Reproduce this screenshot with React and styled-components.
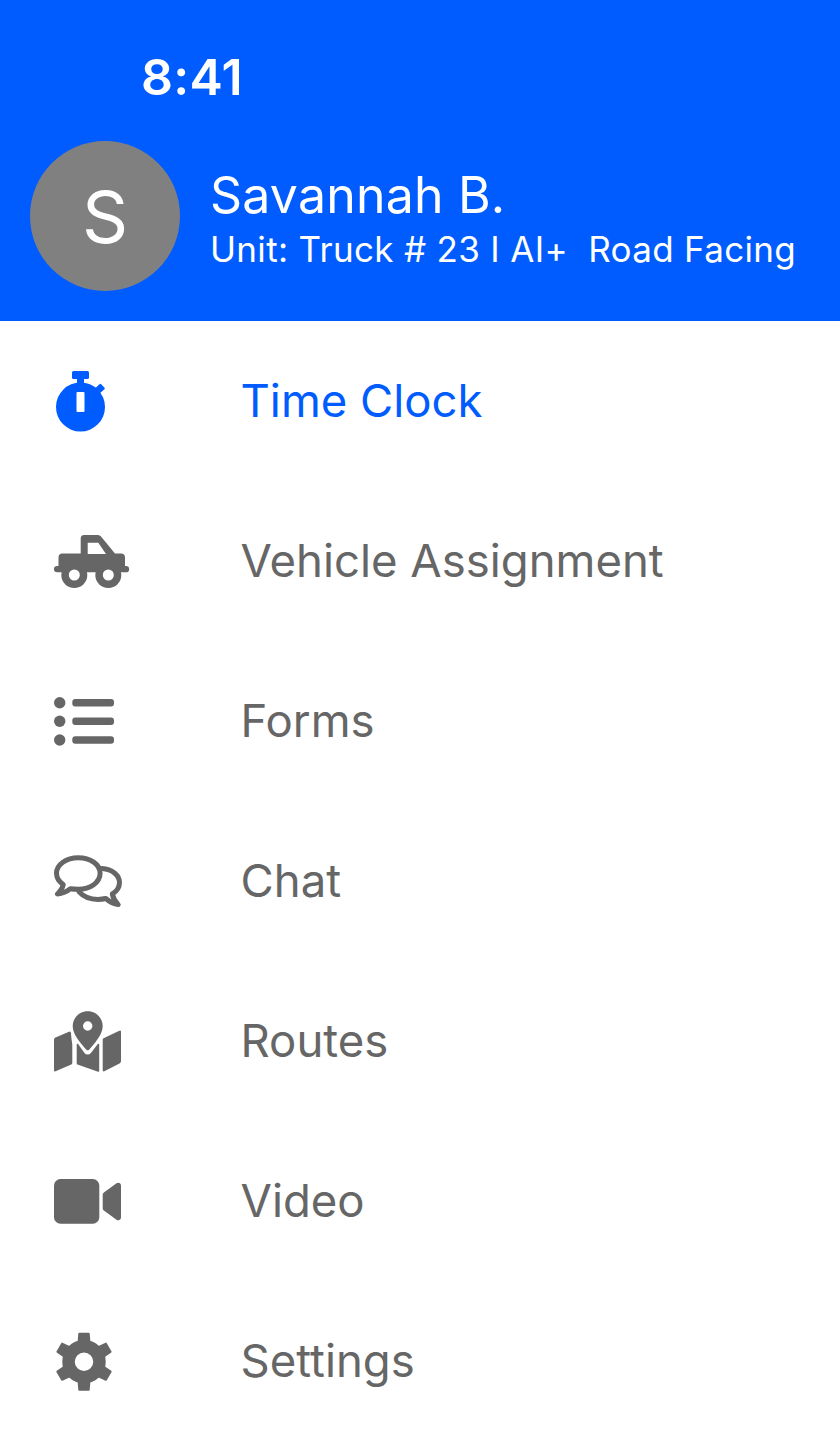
import React from "react";
import styled, { createGlobalStyle } from "styled-components";

const GlobalStyle = createGlobalStyle`
  html, body {
    margin: 0;
    padding: 0;
    background: #fff;
    font-family: Inter, "Liberation Sans", sans-serif;
  }
`;

const Screen = styled.div`
  width: 840px;
  height: 1436px;
  overflow: hidden;
  background: #fff;
`;

const Header = styled.header`
  height: 321px;
  box-sizing: border-box;
  background: #005cff;
  color: #fff;
  padding: 48px 30px 30px;
  display: flex;
  flex-direction: column;
  justify-content: space-between;
`;

const StatusTime = styled.div`
  margin-left: 111px;
  font-size: 50px;
  line-height: 58px;
  font-weight: 600;
  letter-spacing: 0.3px;
`;

const Profile = styled.div`
  display: flex;
  align-items: center;
  gap: 30px;
`;

const Avatar = styled.div`
  width: 150px;
  height: 150px;
  border-radius: 50%;
  background: #808080;
  display: flex;
  align-items: center;
  justify-content: center;
  font-size: 72px;
  font-weight: 400;
`;

const ProfileText = styled.div`
  display: flex;
  flex-direction: column;
  padding-top: 4px;
`;

const Name = styled.div`
  font-size: 50px;
  line-height: 58px;
  font-weight: 400;
  letter-spacing: 0.2px;
`;

const Unit = styled.div`
  margin-top: 4px;
  font-size: 35px;
  line-height: 42px;
  font-weight: 400;
  letter-spacing: 0.32px;
  white-space: pre;
`;

const Menu = styled.nav`
  display: flex;
  flex-direction: column;
`;

const Row = styled.div`
  height: 160px;
  padding-left: 54px;
  display: flex;
  align-items: center;
  color: ${(p) => (p.$active ? "#005cff" : "#666666")};
`;

const IconBox = styled.svg`
  width: 80px;
  height: 80px;
  margin-right: 106.500px;
  flex: none;
  fill: currentColor;
`;

const Label = styled.span`
  font-size: 45.500px;
  line-height: 56px;
  font-weight: 400;
`;

const TimerIcon = () => (
  <IconBox viewBox="0 0 80 80">
    <rect x="18" y="10" width="17" height="8" rx="1.500" />
    <rect x="23" y="16" width="7" height="8" />
    <rect x="41.500" y="24.500" width="8.500" height="7" rx="1" transform="rotate(-42 45.500 28)" />
    <path
      fillRule="evenodd"
      d="M26.500 21.500a24.500 24.500 0 1 0 0 49a24.500 24.500 0 1 0 0-49zM23.500 31h6a1 1 0 0 1 1 1v18a1 1 0 0 1-1 1h-6a1 1 0 0 1-1-1V32a1 1 0 0 1 1-1z"
    />
  </IconBox>
);

const TruckIcon = () => (
  <IconBox viewBox="0 0 80 80">
    <path
      fillRule="evenodd"
      d="M30 14h14a4 4 0 0 1 3 1.500L61 32.500h6a4 4 0 0 1 4 4V45h1a3 3 0 0 1 0 6.300H3a3 3 0 0 1 0-6.300h1.500V36.500a4 4 0 0 1 4-4H26.700V17.500a3.500 3.500 0 0 1 3.300-3.500zM33.700 21.700V33H52L44.300 21.700z"
    />
    <circle cx="20.300" cy="54" r="13" />
    <circle cx="54.300" cy="54" r="13" />
    <circle cx="20.300" cy="54" r="5.500" fill="#fff" />
    <circle cx="54.300" cy="54" r="5.500" fill="#fff" />
  </IconBox>
);

const FormsIcon = () => (
  <IconBox viewBox="0 0 80 80">
    {[21.7, 40.3, 59].map((y) => (
      <React.Fragment key={y}>
        <circle cx="5.700" cy={y} r="5.700" />
        <rect x="18.300" y={y - 3.7} width="41.700" height="7.400" rx="3" />
      </React.Fragment>
    ))}
  </IconBox>
);

const ChatIcon = () => (
  <IconBox viewBox="0 0 80 80">
    <g fill="none" stroke="currentColor" strokeWidth="5" strokeLinejoin="round" strokeLinecap="round">
      <path d="M24.300 16.800c-12 0-21.800 6.800-21.800 15.500c0 4.500 2.600 8.400 6.700 11.200c-.6 3.300-2.600 6.400-5.700 9.500c5.200-.4 9.700-2.500 13-5.300c2.500.4 5.100.5 7.800.5c12 0 21.800-6.800 21.800-15.900s-9.800-15.500-21.800-15.500z" />
      <path d="M48 27.500c10 .6 17.500 6.600 17.500 14c0 4.700-2.800 8.800-7.200 11.500c.7 3.900 3 7.500 5.900 10.600c-5-.8-9-3.200-12.400-6.100c-2.500.6-5.100.9-7.900.9c-8 0-15-3.100-19-7.700" />
    </g>
  </IconBox>
);

const RoutesIcon = () => (
  <IconBox viewBox="0 0 80 80">
    <path
      fillRule="evenodd"
      d="M33.700 10.300c-8.300 0-15 6.600-15 14.800c0 5.600 3.500 11.400 7.500 16.400c2.500 3.200 5 5.900 6 7a2 2 0 0 0 3 0c1-1.100 3.500-3.800 6-7c4-5 7.500-10.800 7.500-16.400c0-8.200-6.700-14.800-15-14.800zM33.700 20.300a4.700 4.700 0 1 1 0 9.400a4.700 4.700 0 1 1 0-9.400z"
    />
    <path d="M15.500 30.600a1.500 1.500 0 0 1 1.500 1.500c.2 5.500 1.200 9.500 1.300 12V62a1.500 1.500 0 0 1-1 1.400L1.600 70.300A1.200 1.200 0 0 1 0 69.200V38.800a2.500 2.500 0 0 1 1.500-2.200z" />
    <path d="M22.700 43.500a.8.800 0 0 1 1.400-.5l6.400 9a4 4 0 0 0 6.400 0l6.900-9a.8.800 0 0 1 1.400.5V70a.8.800 0 0 1-1.100.7L23.500 63.500a1.200 1.200 0 0 1-.8-1.100z" />
    <path d="M48.700 38.700a1.500 1.500 0 0 1 .9-1.400L65.300 29.700A1.200 1.200 0 0 1 67 30.800v29.400a2.500 2.500 0 0 1-1.500 2.200L50.300 70.300a1.100 1.100 0 0 1-1.600-1z" />
  </IconBox>
);

const VideoIcon = () => (
  <IconBox viewBox="0 0 80 80">
    <rect x="0" y="18" width="45.300" height="44.700" rx="6.500" />
    <path d="M48.700 33.500a2.500 2.500 0 0 1 1.200-2.100l12.600-9.200c2-1.300 4.500-.3 4.500 2.300v31.800c0 2.600-2.500 3.800-4.500 2.500l-12.600-9.300a2.500 2.500 0 0 1-1.200-2.100z" />
  </IconBox>
);

const GearIcon = () => (
  <IconBox viewBox="0 0 80 80">
    <circle cx="30" cy="40.700" r="15.500" fill="none" stroke="currentColor" strokeWidth="12.500" />
    {[0, 60, 120, 180, 240, 300].map((a) => (
      <path key={a} d="M23.500 22L24.300 12.500a1 1 0 0 1 1-.8h9.400a1 1 0 0 1 1 .8L36.500 22z" transform={`rotate(${a} 30 40.700)`} />
    ))}
  </IconBox>
);

const items = [
  { label: "Time Clock", Icon: TimerIcon, active: true },
  { label: "Vehicle Assignment", Icon: TruckIcon },
  { label: "Forms", Icon: FormsIcon },
  { label: "Chat", Icon: ChatIcon },
  { label: "Routes", Icon: RoutesIcon },
  { label: "Video", Icon: VideoIcon },
  { label: "Settings", Icon: GearIcon },
];

export default function App() {
  return (
    <Screen>
      <GlobalStyle />
      <Header>
        <StatusTime>8:41</StatusTime>
        <Profile>
          <Avatar>S</Avatar>
          <ProfileText>
            <Name>Savannah B.</Name>
            <Unit>{"Unit: Truck # 23 I AI+  Road Facing"}</Unit>
          </ProfileText>
        </Profile>
      </Header>
      <Menu>
        {items.map(({ label, Icon, active }) => (
          <Row key={label} $active={active}>
            <Icon />
            <Label>{label}</Label>
          </Row>
        ))}
      </Menu>
    </Screen>
  );
}
